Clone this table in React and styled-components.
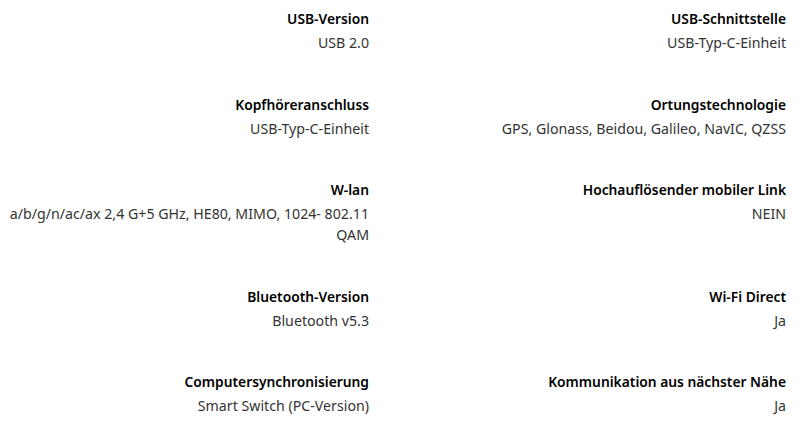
import React from "react";
import styled, { createGlobalStyle } from "styled-components";

const Global = createGlobalStyle`
  html, body { margin: 0; padding: 0; background: #fff; }
  body { font-family: "Noto Sans", "Open Sans", sans-serif; -webkit-font-smoothing: antialiased; }
`;

const Grid = styled.div`
  display: grid;
  grid-template-columns: 369px 369px;
  column-gap: 48px;
  row-gap: 39.5px;
  padding: 7px 14px 0 0;
  width: 800px;
  box-sizing: border-box;
`;

const Item = styled.div`
  display: flex;
  flex-direction: column;
  align-items: flex-end;
  text-align: right;
  gap: 1px;
`;

const Title = styled.div`
  font-size: 13.8px;
  line-height: 24px;
  font-weight: 600;
  color: #000;
  white-space: nowrap;
`;

const Value = styled.div`
  font-size: 14.2px;
  line-height: 21px;
  font-weight: 400;
  color: #333;
`;

const Line = styled.span`
  display: block;
  white-space: nowrap;
`;

const items = [
  ["USB-Version", ["USB 2.0"]],
  ["USB-Schnittstelle", ["USB-Typ-C-Einheit"]],
  ["Kopfhöreranschluss", ["USB-Typ-C-Einheit"]],
  ["Ortungstechnologie", ["GPS, Glonass, Beidou, Galileo, NavIC, QZSS"]],
  ["W-lan", ["a/b/g/n/ac/ax 2,4 G+5 GHz, HE80, MIMO, 1024- 802.11", "QAM"]],
  ["Hochauflösender mobiler Link", ["NEIN"]],
  ["Bluetooth-Version", ["Bluetooth v5.3"]],
  ["Wi-Fi Direct", ["Ja"]],
  ["Computersynchronisierung", ["Smart Switch (PC-Version)"]],
  ["Kommunikation aus nächster Nähe", ["Ja"]],
];

export default function App() {
  return (
    <>
      <Global />
      <Grid>
        {items.map(([t, v]) => (
          <Item key={t}>
            <Title>{t}</Title>
            <Value>
              {v.map((l) => (
                <Line key={l}>{l}</Line>
              ))}
            </Value>
          </Item>
        ))}
      </Grid>
    </>
  );
}
